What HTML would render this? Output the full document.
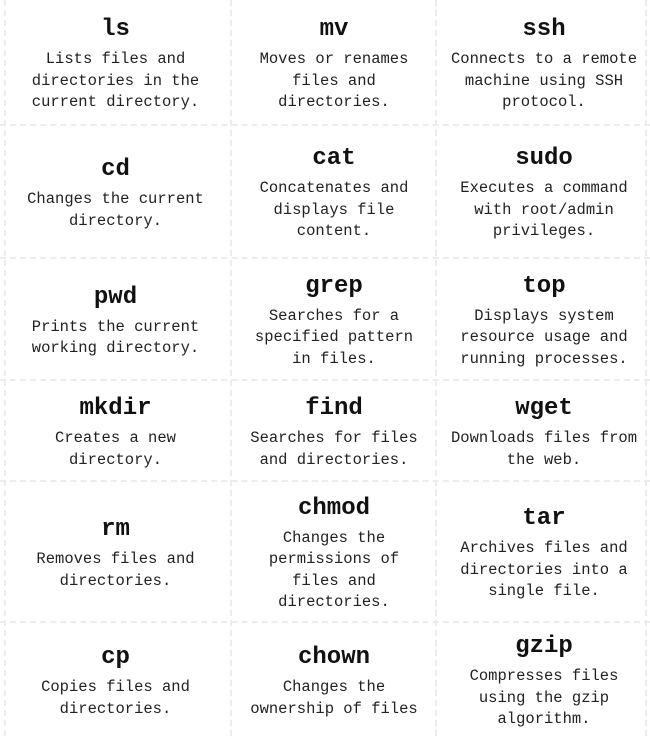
<!DOCTYPE html>
<html><head><meta charset="utf-8"><style>
html,body{margin:0;padding:0;background:#fff;}
body{width:650px;height:736px;position:relative;overflow:hidden;font-family:"Liberation Mono","DejaVu Sans Mono",monospace;color:#1a1a1a;}
.c{position:absolute;display:flex;flex-direction:column;align-items:center;justify-content:center;text-align:center;box-sizing:border-box;padding-top:4px;}
.t{font-size:24px;font-weight:bold;line-height:30px;margin-bottom:4px;color:#111;}
.d{font-size:15.5px;line-height:21.5px;color:#222;}
.h{position:absolute;left:0;width:650px;height:0;border-top:2px dashed #ececec;}
.v{position:absolute;top:0;height:736px;width:0;border-left:2px dashed #ececec;}
</style></head><body>
<div class="h" style="top:124px"></div>
<div class="h" style="top:257px"></div>
<div class="h" style="top:379px"></div>
<div class="h" style="top:480px"></div>
<div class="h" style="top:621px"></div>
<div class="v" style="left:230px"></div>
<div class="v" style="left:435px"></div>
<div class="v" style="left:4px"></div>
<div class="v" style="left:645px"></div>

<div class="c" style="left:0;top:0;width:231px;height:125px"><div class="t">ls</div><div class="d">Lists files and<br>directories in the<br>current directory.</div></div>
<div class="c" style="left:233px;top:0;width:202px;height:125px"><div class="t">mv</div><div class="d">Moves or renames<br>files and<br>directories.</div></div>
<div class="c" style="left:438px;top:0;width:212px;height:125px"><div class="t">ssh</div><div class="d">Connects to a remote<br>machine using SSH<br>protocol.</div></div>

<div class="c" style="left:0;top:126px;width:231px;height:131px"><div class="t">cd</div><div class="d">Changes the current<br>directory.</div></div>
<div class="c" style="left:233px;top:126px;width:202px;height:131px"><div class="t">cat</div><div class="d">Concatenates and<br>displays file<br>content.</div></div>
<div class="c" style="left:438px;top:126px;width:212px;height:131px"><div class="t">sudo</div><div class="d">Executes a command<br>with root/admin<br>privileges.</div></div>

<div class="c" style="left:0;top:259px;width:231px;height:120px"><div class="t">pwd</div><div class="d">Prints the current<br>working directory.</div></div>
<div class="c" style="left:233px;top:259px;width:202px;height:120px"><div class="t">grep</div><div class="d">Searches for a<br>specified pattern<br>in files.</div></div>
<div class="c" style="left:438px;top:259px;width:212px;height:120px"><div class="t">top</div><div class="d">Displays system<br>resource usage and<br>running processes.</div></div>

<div class="c" style="left:0;top:381px;width:231px;height:99px"><div class="t">mkdir</div><div class="d">Creates a new<br>directory.</div></div>
<div class="c" style="left:233px;top:381px;width:202px;height:99px"><div class="t">find</div><div class="d">Searches for files<br>and directories.</div></div>
<div class="c" style="left:438px;top:381px;width:212px;height:99px"><div class="t">wget</div><div class="d">Downloads files from<br>the web.</div></div>

<div class="c" style="left:0;top:482px;width:231px;height:139px"><div class="t">rm</div><div class="d">Removes files and<br>directories.</div></div>
<div class="c" style="left:233px;top:482px;width:202px;height:139px"><div class="t">chmod</div><div class="d">Changes the<br>permissions of<br>files and<br>directories.</div></div>
<div class="c" style="left:438px;top:482px;width:212px;height:139px"><div class="t">tar</div><div class="d">Archives files and<br>directories into a<br>single file.</div></div>

<div class="c" style="left:0;top:623px;width:231px;height:113px"><div class="t">cp</div><div class="d">Copies files and<br>directories.</div></div>
<div class="c" style="left:233px;top:623px;width:202px;height:113px"><div class="t">chown</div><div class="d">Changes the<br>ownership of files</div></div>
<div class="c" style="left:438px;top:623px;width:212px;height:113px"><div class="t">gzip</div><div class="d">Compresses files<br>using the gzip<br>algorithm.</div></div>
</body></html>
